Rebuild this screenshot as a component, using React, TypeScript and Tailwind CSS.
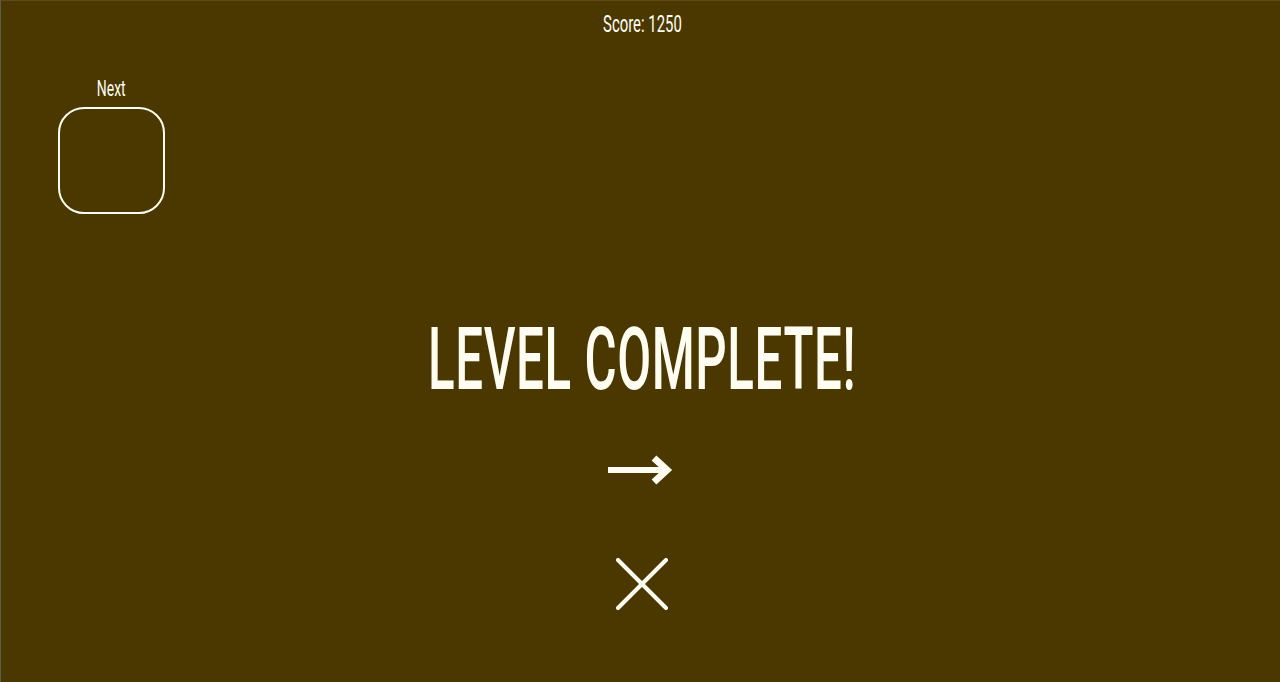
import React from "react";

export default function App() {
  return (
    <div
      className="h-[682px] w-full overflow-hidden bg-[#4a3800] border-l border-t border-l-[#56604c] border-t-[#5c4c1c] flex flex-col text-[#fffdf2]"
      style={{ fontFamily: "Roboto, 'Liberation Sans', sans-serif" }}
    >
      <div className="mt-[11px] h-[24px] text-[24px] leading-none text-center">
        <span className="inline-block scale-x-[0.62] translate-x-[2px]">Score: 1250</span>
      </div>

      <div className="ml-[57px] mt-[41px] w-[107px] flex flex-col items-center">
        <div className="h-[22px] text-[22.5px] leading-none text-center">
          <span className="inline-block scale-x-[0.62]">Next</span>
        </div>
        <div className="mt-[8px] h-[107px] w-[107px] rounded-[26px] border-2 border-[#fffdf2]" />
      </div>

      <div className="mt-[101px] h-[88px] text-[88px] leading-none text-center font-medium tracking-[1px]">
        <span className="inline-block scale-x-[0.56] translate-x-[2px]">LEVEL COMPLETE!</span>
      </div>

      <div className="mt-[48px] flex justify-center">
        <svg width="70" height="36" viewBox="0 0 70 36">
          <line x1="2" y1="19" x2="60" y2="19" stroke="#fffdf2" strokeWidth="6" />
          <polyline
            points="48,7 61,19 48,31"
            fill="none"
            stroke="#fffdf2"
            strokeWidth="7"
            strokeLinejoin="miter"
          />
        </svg>
      </div>

      <div className="mt-[71px] flex justify-center">
        <svg width="52" height="52" viewBox="0 0 52 52" className="ml-[2px]">
          <line x1="2" y1="2" x2="50" y2="50" stroke="#fffdf2" strokeWidth="4" strokeLinecap="round" />
          <line x1="50" y1="2" x2="2" y2="50" stroke="#fffdf2" strokeWidth="4" strokeLinecap="round" />
        </svg>
      </div>
    </div>
  );
}
